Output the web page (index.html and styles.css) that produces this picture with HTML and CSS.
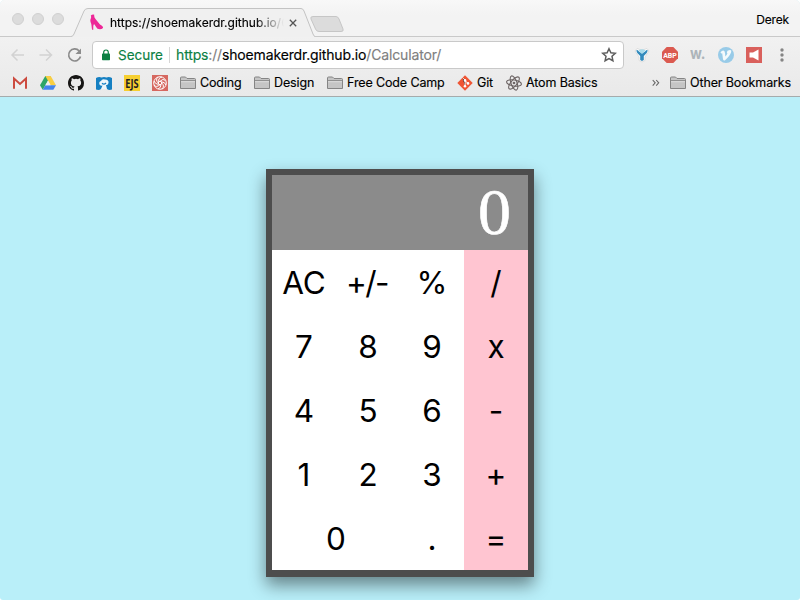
FILE: index.html
```html
<!DOCTYPE html>
<html lang="en">
<head>
<meta charset="utf-8">
<title>Calculator</title>
<link rel="stylesheet" href="styles.css">
</head>
<body>
<div class="window">
  <header class="chrome">
    <div class="tabstrip">
      <div class="lights"><i></i><i></i><i></i></div>
      <div class="tab">
        <svg class="tab-shape" width="244" height="29" viewBox="0 0 244 29"><path d="M0 28.500Q2 28.500 3 26L13 3Q14 .5 17 .5H230Q232 .5 233 3L242 26Q243 28.500 244 28.500V29H0Z" fill="#f0f0f0"/><path d="M0 28.500Q2 28.500 3 26L13 3Q14 .5 17 .5H230Q232 .5 233 3L242 26Q243 28.500 244 28.500" fill="none" stroke="#c3c3c3"/></svg>
        <svg class="shoe" width="14" height="17" viewBox="0 0 14 17"><path d="M.8 1.500Q2.500 0 4.300.7Q3.800 3 5.500 5L10 10.500Q13.500 12 13 14Q11 16 7.500 14.800Q6 13 4.500 10.500Q3 9.500 3.300 15.800H2L1.300 10Q-.3 7 .7 4.800Q1.500 3 .8 1.500Z" fill="#ed2897"/></svg>
        <span class="tab-title">https://shoemakerdr.github.io/C</span>
        <svg class="close" width="8" height="8" viewBox="0 0 8 8"><path d="M.8.8l6.400 6.400M7.200.8L.8 7.200" stroke="#555" stroke-width="1.300"/></svg>
      </div>
      <svg class="newtab" width="34" height="17" viewBox="0 0 34 17"><path d="M3 .5H26Q28 .5 29 3L33 13Q34 15.500 31 15.500H9Q6.500 15.500 5.500 13L1 3Q0 .5 3 .5Z" fill="#dcdcdc" stroke="#c6c6c6"/></svg>
      <span class="user">Derek</span>
    </div>
    <div class="toolbar">
      <svg class="nav" width="82" height="16" viewBox="0 0 82 16" fill="none" stroke="#d2d2d2" stroke-width="1.500"><path d="M14 8H2M7.500 2.500L2 8l5.500 5.500M29.500 8h12M36 2.500L41.500 8 36 13.500"/><g transform="translate(-4.500)" stroke="#8c8c8c" stroke-width="1.700"><path d="M73.700 4A6 6 0 1 0 75 9.500"/><path d="M75.500 1.500V7H70Z" fill="#8c8c8c" stroke="none"/></g></svg>
      <div class="omnibox">
        <svg width="8" height="12" viewBox="0 0 8 12"><rect y="4.500" width="8" height="6.800" rx=".7" fill="#0b8043"/><path d="M1.700 5V3.300a2.300 2.300 0 0 1 4.600 0V5" fill="none" stroke="#0b8043" stroke-width="1.200"/></svg>
        <span class="secure">Secure</span>
        <span class="url"><span class="green">https</span><span class="dim">://</span>shoemakerdr.github.io<span class="dim">/Calculator/</span></span>
        <svg class="star" width="16" height="16" viewBox="0 0 16 16"><path d="M8 1.700l1.900 4.100 4.400.5-3.300 3 .9 4.400L8 11.500l-3.900 2.200.9-4.400-3.300-3 4.400-.5Z" fill="none" stroke="#5d5d5d" stroke-width="1.500"/></svg>
      </div>
      <div class="extensions">
        <svg width="16" height="16" viewBox="0 0 16 16"><path d="M1 4L3 1.500l3 1h4l3-1L15 4l-4 6v3.500L8 15l-3-1.500V10Z" fill="#fff" stroke="#dedede"/><path d="M2.200 3.500Q3.500 2 5 4.500L8 6.500 11 4.500Q12.500 2 13.800 3.500Q13.500 6 9.800 9V13L8 14 6.200 13V9Q2.500 6 2.200 3.500Z" fill="#348bbd"/><path d="M4.500 3.200Q8 1.500 11.500 3.200L8 7Z" fill="#a9dcec"/></svg>
        <svg width="16" height="16" viewBox="0 0 16 16"><path d="M4.700 0h6.600L16 4.700v6.600L11.300 16H4.700L0 11.300V4.700Z" fill="#db5a50"/><text class="abp" x="1.200" y="10.900" textLength="13.600" lengthAdjust="spacingAndGlyphs">ABP</text></svg>
        <svg width="16" height="16" viewBox="0 0 16 16"><text class="wdot" x="0" y="11.500" textLength="15.500" lengthAdjust="spacingAndGlyphs">w.</text></svg>
        <svg width="16" height="16" viewBox="0 0 16 16"><circle cx="8" cy="8" r="8" fill="#98cbe8"/><path d="M2.500 5.200Q5 2.500 6.500 4.300Q7.200 5.500 7.300 9.500Q10.500 6 8.800 5.800L9.500 3.700Q14 2 13.200 5Q12 9 6.800 13.500Q5.400 14 5 12.200L4.200 6.300L3.200 6.600Z" fill="#f5fafc"/></svg>
        <svg width="16" height="16" viewBox="0 0 16 16"><path d="M0 0h16v16H0Z" fill="#d9605c"/><path d="M3.500 5.500h3.500L12.500 2.500v11L7 10.500H3.500Z" fill="#fff"/></svg>
        <svg class="dots" width="16" height="16" viewBox="0 0 16 16" fill="#858585"><circle cx="8" cy="3" r="1.700"/><circle cx="8" cy="8" r="1.700"/><circle cx="8" cy="13" r="1.700"/></svg>
      </div>
    </div>
    <nav class="bookmarks">
      <svg class="ico" width="16" height="16" viewBox="0 0 16 16"><path d="M1.500 2.800h13v11h-13Z" fill="#eee"/><path d="M2 13.700V3.500L8 9l6-5.500v10.200" fill="none" stroke="#cc4b40" stroke-width="2"/></svg>
      <svg class="ico" width="16" height="16" viewBox="0 0 16 16"><path d="M5.300 1H10.700L5.400 10.200 2.700 14.800 0 10.200Z" fill="#2da566"/><path d="M5.300 1H10.700L16 10.200H10.600Z" fill="#f8ce43"/><path d="M5.400 10.200H16L13.300 14.800H2.700Z" fill="#4284ed"/><path d="M8 5.600L10.600 10.200H5.400Z" fill="#eee"/></svg>
      <svg class="ico" width="16" height="16" viewBox="0 0 16 16"><path d="M8 0C3.580 0 0 3.580 0 8c0 3.540 2.290 6.530 5.470 7.590.4.070.55-.17.55-.38 0-.19-.01-.82-.01-1.490-2.010.37-2.530-.49-2.690-.94-.09-.23-.48-.94-.82-1.130-.28-.15-.68-.52-.01-.53.63-.01 1.080.58 1.230.82.72 1.210 1.870.87 2.330.66.07-.52.28-.87.51-1.070-1.780-.2-3.640-.89-3.640-3.950 0-.87.31-1.590.82-2.150-.08-.2-.36-1.020.08-2.120 0 0 .67-.21 2.200.82a7.500 7.500 0 0 1 4 0c1.530-1.040 2.200-.82 2.200-.82.44 1.100.16 1.920.08 2.120.51.56.82 1.270.82 2.150 0 3.070-1.870 3.750-3.650 3.950.29.25.54.73.54 1.480 0 1.070-.01 1.930-.01 2.200 0 .21.15.46.55.38A8 8 0 0 0 16 8c0-4.420-3.580-8-8-8Z" fill="#161514"/></svg>
      <svg class="ico" width="18" height="16" viewBox="0 0 18 16"><path d="M0 3Q3 1.300 5.500 2.500Q8 1.500 10.500 2.500Q13 1.300 16 3V14.500Q13 15.500 11 14L8 13.200 5 14Q3 15.500 0 14.500Z" fill="#1680c2"/><path d="M3.500 9.500Q2.500 6.500 5 6Q6 3.500 9 4.500Q13 4.500 12.500 8Q12 10.500 10 10L11 14H5L6.500 10.500Q4 11 3.500 9.500Z" fill="#eef6fb"/><path d="M6 8.300Q8 10 10 8" fill="none" stroke="#1680c2" stroke-width="1.300"/></svg>
      <svg class="ico ejs-icon" width="16" height="16" viewBox="0 0 16 16"><path d="M0 0h16v16H0Z" fill="#f6cf31"/><text class="ejs" x="1.300" y="13" textLength="13.300" lengthAdjust="spacingAndGlyphs">EJS</text></svg>
      <svg class="ico" width="16" height="16" viewBox="0 0 16 16"><path d="M0 0h16v16H0Z" fill="#d66860"/><g fill="none" stroke="#fff" stroke-width="1"><circle cx="8" cy="8" r="6.300"/><circle cx="8" cy="8" r="1.700"/><path d="M8 6.300Q11 3 13.500 5.500M9.700 8Q13 11 10 14M8 9.700Q4 13 2 10M6.300 8Q3 5 6 2M6.700 6.800Q6 3 10 2M9.300 6.800Q13 7 14 10M9 9.500Q9 13 6 14M6.500 9.500Q3 9 2 6"/></g></svg>
      <span class="mark b1"><svg width="16" height="14" viewBox="0 0 16 14"><use href="#folder"/></svg>Coding</span>
      <span class="mark b2"><svg width="16" height="14" viewBox="0 0 16 14"><use href="#folder"/></svg>Design</span>
      <span class="mark b3"><svg width="16" height="14" viewBox="0 0 16 14"><use href="#folder"/></svg>Free Code Camp</span>
      <span class="mark b4"><svg width="16" height="16" viewBox="0 0 16 16"><path d="M8 .3L15.700 8 8 15.700.3 8Z" fill="#ef5534"/><path d="M5.600 2.900L8 5.200V11M8 5.500l3 3" stroke="#fff" stroke-width="1"/><g fill="#fff"><circle cx="8" cy="5.400" r="1.300"/><circle cx="8" cy="11.300" r="1.300"/><circle cx="11" cy="8.400" r="1.300"/></g></svg>Git</span>
      <span class="mark b5"><svg width="16" height="16" viewBox="0 0 16 16" fill="none" stroke="#6d6565" stroke-width="1.100"><ellipse cx="8" cy="8" rx="3" ry="7.500" transform="rotate(-20 8 8)"/><ellipse cx="8" cy="8" rx="3" ry="7.500" transform="rotate(40 8 8)"/><ellipse cx="8" cy="8" rx="3" ry="7.500" transform="rotate(100 8 8)"/><circle cx="8" cy="8" r=".8" fill="#6d6565"/></svg>Atom Basics</span>
      <svg class="more" width="8" height="8" viewBox="0 0 8 8"><path d="M.7 1l2.500 2.800L.7 6.600M4.200 1l2.500 2.800-2.500 2.800" fill="none" stroke="#666" stroke-width="1.100"/></svg>
      <span class="mark b6"><svg width="16" height="14" viewBox="0 0 16 14"><g id="folder"><path d="M.5 12.500V2Q.5 1 1.500 1H5.500L7 2.500H14.500Q15.500 2.500 15.500 3.500V12.500Z" fill="#c5c5c5" stroke="#858585"/><path d="M1 4.700H15" stroke="#858585"/><path d="M1 5.700H15" stroke="#dedede"/></g></svg>Other Bookmarks</span>
    </nav>
  </header>
  <main class="page">
    <section class="calculator">
      <div class="display">0</div>
      <div class="keys">
        <button>AC</button><button class="sign">+/-</button><button>%</button><button class="op">/</button>
        <button>7</button><button>8</button><button>9</button><button class="op">x</button>
        <button>4</button><button>5</button><button>6</button><button class="op">-</button>
        <button>1</button><button>2</button><button>3</button><button class="op">+</button>
        <button class="wide">0</button><button>.</button><button class="op">=</button>
      </div>
    </section>
  </main>
</div>
</body>
</html>
```
FILE: styles.css
```css
* { box-sizing: border-box; }
html { background: #fff; }
body { margin: 0; font-family: Inter, "Liberation Sans", sans-serif; color: #000; }
svg { display: block; flex: none; }
.window { width: 800px; height: 600px; overflow: hidden; border-radius: 5px 5px 3px 3px; display: flex; flex-direction: column; background: #b9eff9; }
.chrome { height: 97px; flex: none; border-bottom: 1px solid #a5abac; background: linear-gradient(#f1f1f1 37px, #e9e9e9 96px); -webkit-text-stroke: .15px; }
.tabstrip { height: 37px; display: flex; align-items: flex-start; background: linear-gradient(#f8f8f8, #f3f3f3 15px); box-shadow: inset 0 -1px #c9c9c9; }
.lights { display: flex; gap: 8px; padding: 13px 0 0 12px; width: 71px; flex: none; }
.lights i { width: 12px; height: 12px; border-radius: 50%; background: #dcdcdc; border: 1px solid #d0d0d0; }
.tab { width: 244px; height: 29px; margin-top: 8px; display: grid; grid-template-columns: 19px 20px 179px 26px; align-items: center; flex: none; }
.tab-shape { grid-area: 1 / 1 / 2 / 5; }
.shoe { grid-area: 1 / 2; }
.tab-title { grid-area: 1 / 3; width: 175px; overflow: hidden; white-space: nowrap; font-size: 12px; line-height: 16px; -webkit-mask-image: linear-gradient(90deg, #000 145px, transparent 174px); mask-image: linear-gradient(90deg, #000 145px, transparent 174px); }
.close { grid-area: 1 / 4; }
.newtab { margin: 16px 0 0 -5px; }
.user { margin: 12px 11px 0 auto; font-size: 12px; line-height: 16px; letter-spacing: -.15px; }
.toolbar { height: 33px; display: flex; padding: 4px 0 0; }
.nav { margin: 6px 0 0 10px; }
.omnibox { width: 532px; height: 28px; display: flex; align-items: center; padding: 0 6px 0 9px; background: #fff; border: 1px solid #c9c9c9; border-radius: 4px; font-size: 14px; white-space: nowrap; }
.secure { width: 51px; margin-left: 8px; color: #0b8043; font-size: 13.500px; }
.url { padding: 0 0 0 6px; border-left: 1px solid #d6d6d6; line-height: 16px; letter-spacing: -.15px; }
.green { color: #0b8043; }
.dim { color: #808080; }
.star { margin-left: auto; }
.extensions { display: flex; gap: 12px; margin: 6px 0 0 10px; }
.abp { font: bold 7.500px Roboto, sans-serif; fill: #fff; }
.wdot { font: bold 15px Inter, sans-serif; fill: #acb4b9; }
.bookmarks { height: 26px; display: flex; align-items: center; padding: 0 9px 0 12px; font-size: 12.500px; letter-spacing: -.13px; white-space: nowrap; }
.ico { margin-right: 12px; }
.ejs-icon { margin-left: -2px; overflow: visible; }
.ejs { font: bold 12px "Open Sans", sans-serif; letter-spacing: 0; fill: #222; }
.mark { display: flex; align-items: center; gap: 4px; flex: none; line-height: 16px; }
.b1 { width: 74px; }
.b2 { width: 73px; }
.b3 { width: 130px; }
.b4 { width: 49px; }
.b5 { width: 146px; }
.b6 { margin-left: auto; }
.page { flex: 1; display: flex; justify-content: center; align-items: flex-start; padding-top: 72px; }
.calculator { width: 268px; border: 6px solid #4d4d4d; border-bottom-width: 7px; box-shadow: 0 8px 16px rgba(0, 0, 0, .45); }
.display { height: 75px; padding-right: 17px; background: #8b8b8b; color: #fff; font: 66px/74px "Liberation Serif", serif; text-align: right; -webkit-text-stroke: .6px; }
.keys { display: grid; grid-template-columns: repeat(4, 64px); grid-auto-rows: 64px; background: #fff; }
button { border: 0; padding: 1px 0 0; background: none; color: #000; font: 31.500px/61px Inter, sans-serif; text-align: center; }
.sign { padding-right: 2px; letter-spacing: -1.500px; }
.op { background: #ffc5d1; }
.wide { grid-column: span 2; }
```
